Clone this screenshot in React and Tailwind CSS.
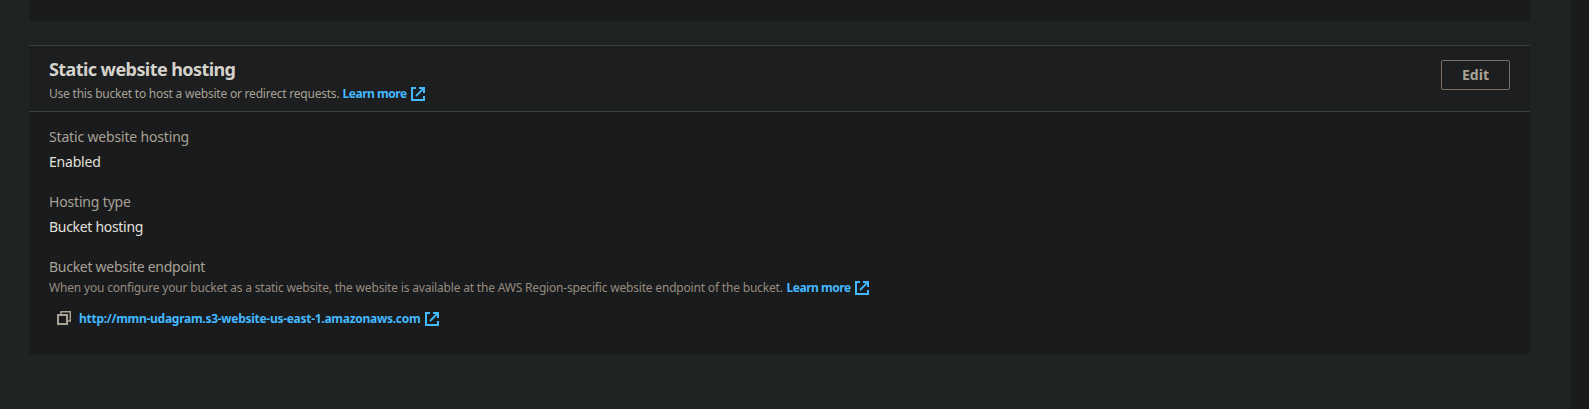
function ExternalIcon() {
  return (
    <svg viewBox="0 0 14 14" className="size-3.5 shrink-0" fill="none" stroke="#44b9ff" strokeWidth="2">
      <path d="M5 1H1v12h12V9M8 1h5v5" />
      <path d="M13 1 5 9" strokeWidth="1.8" />
    </svg>
  );
}

function CopyIcon() {
  return (
    <svg viewBox="0 0 14 14" className="mb-0.5 size-3.5 shrink-0" fill="none" stroke="#aaa395" strokeWidth="2">
      <path d="M1 4h9v9H1z" />
      <path d="M4 4V.75h9.25V10H10" strokeWidth="1.5" />
    </svg>
  );
}

function LearnMore() {
  return (
    <a className="flex items-center gap-1 font-bold text-[#44b9ff]">
      <span className="w-16 whitespace-nowrap tracking-[-0.46px]">Learn more</span>
      <ExternalIcon />
    </a>
  );
}

function Field({ label, value, labelTracking, valueTracking }) {
  return (
    <div className="mb-5 h-[45px] text-sm leading-5">
      <div className={`text-[#a8a296] ${labelTracking}`}>{label}</div>
      <div className={`mt-[5px] text-[#e2e0db] ${valueTracking}`}>{value}</div>
    </div>
  );
}

export default function App() {
  return (
    <div className="flex h-[409px] w-[1589px] overflow-hidden bg-[#1a1b1c] font-['Noto_Sans',sans-serif]">
      <main className="h-full w-[1571px] bg-[#1f2323] pl-[29px]">
        <div className="h-[21px] w-[1501px] bg-[#191b1c]" />
        <section className="mt-6 h-[309px] w-[1501px] bg-[#1a1b1c]">
          <header className="flex h-[67px] items-start justify-between border-y border-[#3a3e3f] bg-[#1c1e1f] px-5">
            <div className="pt-3">
              <h2 className="text-lg leading-[22px] font-bold tracking-[-0.58px] text-[#d5d2cc]">Static website hosting</h2>
              <div className="mt-[5px] flex h-[18px] items-center gap-1 text-xs leading-[18px]">
                <span className="w-[289.5px] whitespace-nowrap tracking-[-0.22px] text-[#a8a296]">
                  Use this bucket to host a website or redirect requests.
                </span>
                <LearnMore />
              </div>
            </div>
            <button className="mt-3.5 h-[30px] w-[69px] rounded-xs border border-[#7b7063] text-sm leading-5 font-bold text-[#aaa395]">
              Edit
            </button>
          </header>
          <div className="px-5 pt-[15px]">
            <Field label="Static website hosting" value="Enabled" labelTracking="tracking-[-0.17px]" valueTracking="tracking-[-0.2px]" />
            <Field label="Hosting type" value="Bucket hosting" labelTracking="tracking-[-0.17px]" valueTracking="tracking-[-0.3px]" />
            <div className="text-sm leading-5 tracking-[-0.28px] text-[#a8a296]">Bucket website endpoint</div>
            <div className="mt-0.5 flex h-[18px] items-center gap-1 text-xs leading-[18px]">
              <span className="w-[733.5px] whitespace-nowrap tracking-[-0.185px] text-[#968b80]">
                When you configure your bucket as a static website, the website is available at the AWS Region-specific website endpoint of the bucket.
              </span>
              <LearnMore />
            </div>
            <div className="mt-3 flex h-5 items-center pl-2 text-xs leading-5">
              <CopyIcon />
              <a className="ml-2 flex items-center gap-[5px] font-bold text-[#44b9ff]">
                <span className="w-[341px] whitespace-nowrap tracking-[-0.28px]">http://mmn-udagram.s3-website-us-east-1.amazonaws.com</span>
                <ExternalIcon />
              </a>
            </div>
          </div>
        </section>
      </main>
    </div>
  );
}
